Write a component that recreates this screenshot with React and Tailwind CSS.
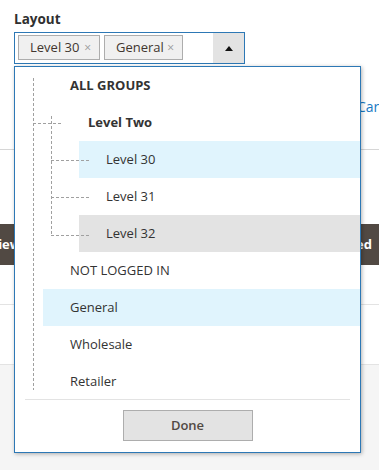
import React from "react";

const openSans = { fontFamily: "'Open Sans', 'Liberation Sans', sans-serif" };

// One row of the options tree
function Option({ label, level = 1, bold = false, tone = "" }) {
  const indent = level === 1 ? "ml-[28px]" : level === 2 ? "ml-[46px]" : "ml-[64px]";
  const bg = tone === "active" ? "bg-[#e0f4fd]" : tone === "hover" ? "bg-[#e3e3e3]" : "";
  return (
    <div className={`h-[37px] flex items-center pl-[27px] ${indent} ${bg}`}>
      <span className={`text-[13px] text-[#333] whitespace-nowrap ${bold ? "font-bold" : ""}`}>
        {label}
      </span>
    </div>
  );
}

function Tag({ label, width }) {
  return (
    <div
      className={`h-[25px] ${width} flex items-center justify-between pl-[11px] pr-[8px] bg-[#f0f0f0] border border-[#adadad] text-[13px] text-[#41362f]`}
    >
      <span>{label}</span>
      <span className="text-[12px] text-[#9a9a9a]">×</span>
    </div>
  );
}

function TreeLines() {
  const dash = { stroke: "#a0a0a0", strokeWidth: 1, strokeDasharray: "3 2" };
  return (
    <svg className="absolute left-0 top-0 z-10 pointer-events-none" width="120" height="340">
      <line x1="18.5" y1="11" x2="18.5" y2="323" {...dash} />
      <line x1="18" y1="56.5" x2="46" y2="56.5" {...dash} />
      <line x1="36.5" y1="49" x2="36.5" y2="169" {...dash} />
      <line x1="36" y1="93.5" x2="74" y2="93.5" {...dash} />
      <line x1="36" y1="130.5" x2="74" y2="130.5" {...dash} />
      <line x1="36" y1="168.5" x2="74" y2="168.5" {...dash} />
    </svg>
  );
}

export default function App() {
  return (
    <div className="relative w-[379px] h-[470px] overflow-hidden bg-white" style={openSans}>
      {/* ===== page behind the dropdown ===== */}
      <div className="flex flex-col h-full">
        <div className="pt-[10px] px-[14px]">
          <div className="text-[13.5px] leading-[18px] font-bold text-[#303030]">Layout</div>
          <div className="mt-[4px] w-[231px] h-[32px] border border-[#2d78b5] flex">
            <div className="flex-1 flex items-start gap-[4px] pt-[2px] pl-[3px]">
              <Tag label="Level 30" width="w-[82px]" />
              <Tag label="General" width="w-[79px]" />
            </div>
            <div className="w-[31px] h-full bg-[#e3e3e3] flex items-center justify-center">
              <svg width="8" height="5" viewBox="0 0 8 5">
                <path d="M0 5 L4 0 L8 5 Z" fill="#111" />
              </svg>
            </div>
          </div>
        </div>

        <div className="mt-[34px] pl-[357px] text-[14px] leading-[18px] text-[#1979c3] whitespace-nowrap">
          Cart
        </div>

        <div className="mt-[33px] border-t border-[#d6d6d6]" />

        <div className="mt-[74px] h-[41px] flex justify-between">
          <div className="-ml-[39px] w-[120px] bg-[#514943] flex items-center pl-[8px] text-[13px] font-bold text-white">
            Preview
          </div>
          <div className="-mr-[10px] w-[120px] bg-[#514943] flex items-center justify-end pr-[17px] text-[13px] font-bold text-white">
            Advanced
          </div>
        </div>

        <div className="mt-[39px] border-t border-[#e3e3e3]" />

        <div className="mt-[59px] flex-1 bg-[#f5f5f5] border-t border-[#e3e3e3]" />
      </div>

      {/* ===== dropdown menu ===== */}
      <div className="absolute left-[14px] top-[66px] w-[347px] h-[387px] bg-white border border-[#2d78b5] shadow-[1px_1px_4px_rgba(0,0,0,0.3)] flex flex-col">
        <div className="relative">
          <TreeLines />
          <Option label="ALL GROUPS" level={1} bold />
          <Option label="Level Two" level={2} bold />
          <Option label="Level 30" level={3} tone="active" />
          <Option label="Level 31" level={3} />
          <Option label="Level 32" level={3} tone="hover" />
          <Option label="NOT LOGGED IN" level={1} />
          <Option label="General" level={1} tone="active" />
          <Option label="Wholesale" level={1} />
          <Option label="Retailer" level={1} />
        </div>
        <div className="mx-[10px] -mt-[1px] border-t border-[#e3e3e3]" />
        <div className="flex justify-center pt-[10px]">
          <button className="w-[130px] h-[31px] bg-[#e3e3e3] border border-[#adadad] text-[13px] font-semibold text-[#514943]">
            Done
          </button>
        </div>
      </div>
    </div>
  );
}
